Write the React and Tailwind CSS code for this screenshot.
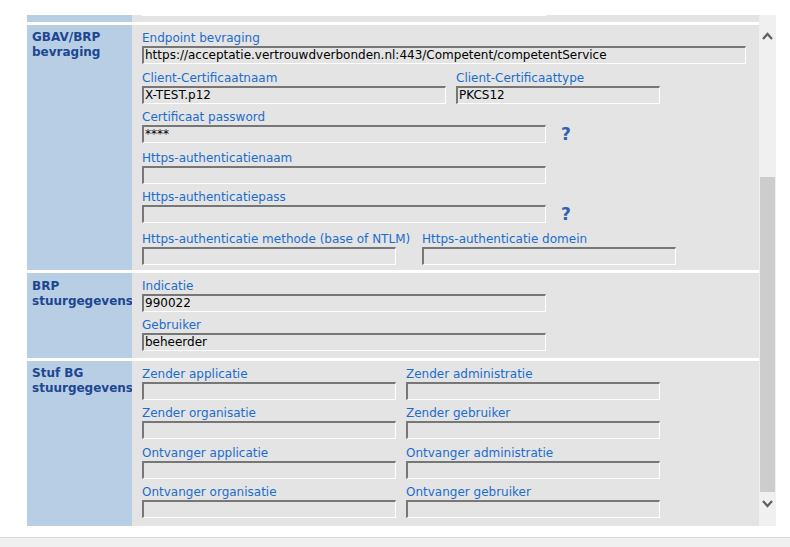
import React from 'react';

// Form block styled after an old-style settings page with inset inputs
function Input({ w, value }) {
  return (
    <div
      className={`h-[18px] border-t-2 border-l-2 border-r border-b border-t-[#777777] border-l-[#777777] border-r-white border-b-white pl-[1px] leading-[15px] text-black whitespace-nowrap overflow-hidden ${w}`}
    >
      {value}
    </div>
  );
}

function Label({ children }) {
  return <div className="h-[16px] leading-[16px] text-[#1b6dcc] whitespace-nowrap">{children}</div>;
}

function Help() {
  return <div className="ml-[15px] h-[18px] leading-[18px] text-[17px] font-bold text-[#2f5fb3]">?</div>;
}

function Section({ title, titleTop, pad, children }) {
  return (
    <div className="flex">
      <div className={`w-[105px] shrink-0 bg-[#b8cee5] pl-[5px] font-bold leading-[15px] text-[#1d4690] ${titleTop}`}>
        {title}
      </div>
      <div className={`flex-1 bg-[#e4e4e4] pl-[10px] ${pad}`}>{children}</div>
    </div>
  );
}

function ChevronUp() {
  return (
    <svg width="11" height="8" viewBox="0 0 11 8" className="mx-auto block">
      <polyline points="1,7 5.5,2 10,7" fill="none" stroke="#606060" strokeWidth="2.2" />
    </svg>
  );
}

function ChevronDown() {
  return (
    <svg width="11" height="8" viewBox="0 0 11 8" className="mx-auto block">
      <polyline points="1,1 5.5,6 10,1" fill="none" stroke="#606060" strokeWidth="2.2" />
    </svg>
  );
}

export default function App() {
  return (
    <div className="w-[790px] h-[547px] bg-white overflow-hidden flex flex-col font-['DejaVu_Sans',Verdana,sans-serif] text-[12px]">
      <div className="h-[15px] shrink-0" />

      <div className="flex ml-[27px] h-[511px] shrink-0">
        {/* scrolled content */}
        <div className="w-[732px] flex flex-col gap-[3px] bg-white overflow-hidden">
          <div className="flex h-[7px] shrink-0">
            <div className="w-[105px] bg-[#b8cee5]" />
            <div className="flex-1 bg-[#e4e4e4] pl-[10px]">
              <div className="w-[404px] h-px bg-white" />
            </div>
          </div>

          <Section
            title={<>GBAV/BRP<br />bevraging</>}
            titleTop="pt-[5px]"
            pad="pt-[5px] pb-[5px]"
          >
            <div>
              <Label>Endpoint bevraging</Label>
              <Input w="w-[604px]" value="https://acceptatie.vertrouwdverbonden.nl:443/Competent/competentService" />
            </div>
            <div className="flex gap-[10px] mt-[6px]">
              <div>
                <Label>Client-Certificaatnaam</Label>
                <Input w="w-[304px]" value="X-TEST.p12" />
              </div>
              <div>
                <Label>Client-Certificaattype</Label>
                <Input w="w-[204px]" value="PKCS12" />
              </div>
            </div>
            <div className="mt-[5px]">
              <Label>Certificaat password</Label>
              <div className="flex">
                <Input w="w-[404px]" value="****" />
                <Help />
              </div>
            </div>
            <div className="mt-[7px]">
              <Label>Https-authenticatienaam</Label>
              <Input w="w-[404px]" value="" />
            </div>
            <div className="mt-[5px]">
              <Label>Https-authenticatiepass</Label>
              <div className="flex">
                <Input w="w-[404px]" value="" />
                <Help />
              </div>
            </div>
            <div className="flex mt-[8px]">
              <div className="w-[280px]">
                <Label>Https-authenticatie methode (base of NTLM)</Label>
                <Input w="w-[254px]" value="" />
              </div>
              <div>
                <Label>Https-authenticatie domein</Label>
                <Input w="w-[254px]" value="" />
              </div>
            </div>
          </Section>

          <Section
            title={<>BRP<br />stuurgegevens</>}
            titleTop="pt-[6px]"
            pad="pt-[5px] pb-[7px]"
          >
            <div>
              <Label>Indicatie</Label>
              <Input w="w-[404px]" value="990022" />
            </div>
            <div className="mt-[5px]">
              <Label>Gebruiker</Label>
              <Input w="w-[404px]" value="beheerder" />
            </div>
          </Section>

          <Section
            title={<>Stuf BG<br />stuurgegevens</>}
            titleTop="pt-[5px]"
            pad="pt-[5px] pb-[8px]"
          >
            <div className="grid grid-cols-[264px_254px] gap-y-[5px]">
              <div>
                <Label>Zender applicatie</Label>
                <Input w="w-[254px]" value="" />
              </div>
              <div>
                <Label>Zender administratie</Label>
                <Input w="w-[254px]" value="" />
              </div>
              <div>
                <Label>Zender organisatie</Label>
                <Input w="w-[254px]" value="" />
              </div>
              <div>
                <Label>Zender gebruiker</Label>
                <Input w="w-[254px]" value="" />
              </div>
              <div className="mt-[1px]">
                <Label>Ontvanger applicatie</Label>
                <Input w="w-[254px]" value="" />
              </div>
              <div className="mt-[1px]">
                <Label>Ontvanger administratie</Label>
                <Input w="w-[254px]" value="" />
              </div>
              <div>
                <Label>Ontvanger organisatie</Label>
                <Input w="w-[254px]" value="" />
              </div>
              <div>
                <Label>Ontvanger gebruiker</Label>
                <Input w="w-[254px]" value="" />
              </div>
            </div>
          </Section>
        </div>

        {/* scrollbar */}
        <div className="w-[17px] bg-[#f0f0f0] flex flex-col">
          <div className="mt-[17px]">
            <ChevronUp />
          </div>
          <div className="mt-[137px] ml-[1px] w-[15px] h-[315px] bg-[#cdcdcd]" />
          <div className="mt-[8px]">
            <ChevronDown />
          </div>
        </div>
      </div>

      <div className="h-[11px] shrink-0" />
      <div className="flex-1 border-t border-[#dadada] bg-[#f0f0f0]" />
    </div>
  );
}
